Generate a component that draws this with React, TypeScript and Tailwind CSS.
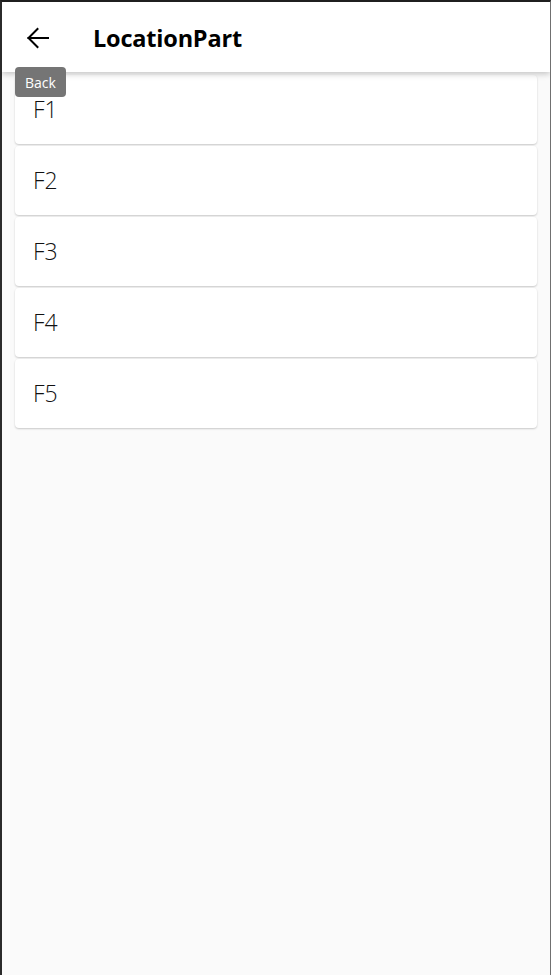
import React from 'react';

const floors = ['F1', 'F2', 'F3', 'F4', 'F5'];

const BackArrow: React.FC = () => (
  <svg width="24" height="24" viewBox="0 0 24 24" fill="none" stroke="#000" strokeWidth="2" strokeLinecap="square">
    <path d="M22 12H2.5" />
    <path d="M11.5 3L2.5 12L11.5 21" />
  </svg>
);

const App: React.FC = () => {
  return (
    <div
      className="w-[551px] h-[975px] bg-[#fafafa] border-t-2 border-t-[#1f1f1f] border-l-2 border-l-[#2b2b2b] border-r border-r-[#707070] flex flex-col overflow-hidden"
      style={{ fontFamily: '"Open Sans", "Noto Sans", sans-serif' }}
    >
      <header className="relative z-10 h-[70px] shrink-0 bg-white flex items-center shadow-[0_2px_6px_rgba(0,0,0,0.22)]">
        <button className="w-[24px] h-[24px] ml-[24px] mt-[1px] flex items-center justify-center">
          <BackArrow />
        </button>
        <h1 className="ml-[43px] mt-[4px] text-[23.5px] font-bold text-black tracking-[-0.2px]">LocationPart</h1>
        <div className="absolute left-[13px] top-[65px] w-[51px] h-[30px] rounded-[4px] bg-[#757575] text-white text-[14px] flex items-center justify-center">
          Back
        </div>
      </header>

      <div className="flex flex-col gap-[2px] pt-[3px] px-[13px]">
        {floors.map(f => (
          <div
            key={f}
            className="h-[69px] bg-white rounded-[4px] shadow-[0_1px_2px_rgba(0,0,0,0.2)] flex items-center pl-[18px]"
          >
            <span className="text-[23px] font-light text-[#111]">{f}</span>
          </div>
        ))}
      </div>
    </div>
  );
};

export default App;
